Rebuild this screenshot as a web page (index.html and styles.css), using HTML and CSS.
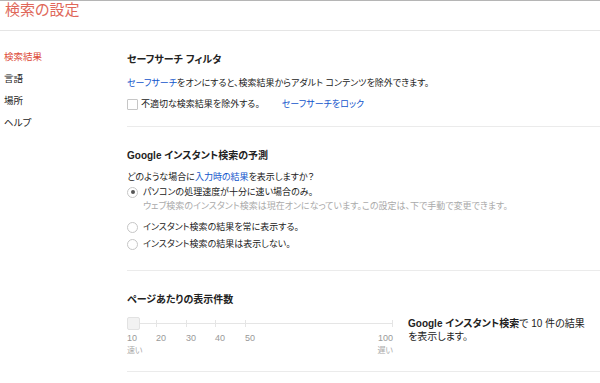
FILE: index.html
```html
<!DOCTYPE html>
<html lang="ja">
<head>
    <meta charset="utf-8">
    <title>検索の設定</title>
    <link rel="stylesheet" href="styles.css">
</head>
<body>
    <div class="top-bar">
        <h1 class="page-title">検索の設定</h1>
    </div>
    <div class="layout">
        <ul class="side-nav">
            <li class="active">検索結果</li>
            <li>言語</li>
            <li>場所</li>
            <li>ヘルプ</li>
        </ul>
        <div class="content">
            <div class="section section-safe">
                <h2>セーフサーチ フィルタ</h2>
                <p class="desc"><a href="#">セーフサーチ</a>をオンにすると、検索結果からアダルト コンテンツを除外できます。</p>
                <div class="check-row">
                    <span class="checkbox"></span>
                    <span>不適切な検索結果を除外する。</span>
                    <a href="#" class="lock-link">セーフサーチをロック</a>
                </div>
            </div>
            <div class="section section-instant">
                <h2>Google インスタント検索の予測</h2>
                <p class="question">どのような場合に<a href="#">入力時の結果</a>を表示しますか？</p>
                <div class="radio-row first">
                    <span class="radio checked"></span>
                    <span>パソコンの処理速度が十分に速い場合のみ。</span>
                </div>
                <p class="hint">ウェブ検索のインスタント検索は現在オンになっています。この設定は、下で手動で変更できます。</p>
                <div class="radio-row second">
                    <span class="radio"></span>
                    <span>インスタント検索の結果を常に表示する。</span>
                </div>
                <div class="radio-row third">
                    <span class="radio"></span>
                    <span>インスタント検索の結果は表示しない。</span>
                </div>
            </div>
            <div class="section section-count">
                <h2>ページあたりの表示件数</h2>
                <div class="count-row">
                    <div class="slider">
                        <div class="track">
                            <span class="tick"></span>
                            <span class="tick"></span>
                            <span class="tick"></span>
                            <span class="tick"></span>
                            <span class="tick"></span>
                            <span class="tick"></span>
                            <span class="thumb"></span>
                        </div>
                        <div class="labels">
                            <span>10</span>
                            <span>20</span>
                            <span>30</span>
                            <span>40</span>
                            <span>50</span>
                            <span class="end">100</span>
                        </div>
                        <div class="speed">
                            <span>速い</span>
                            <span>遅い</span>
                        </div>
                    </div>
                    <p class="count-note"><b>Google インスタント検索</b>で 10 件の結果<br>を表示します。</p>
                </div>
            </div>
        </div>
    </div>
</body>
</html>
```
FILE: styles.css
```css
body {
    margin: 0;
    font-family: "Liberation Sans", "Noto Sans CJK JP", sans-serif;
    font-size: 9px;
    color: #222;
    background: #fff;
    font-feature-settings: "palt";
}
a {
    color: #1155cc;
    text-decoration: none;
}
.top-bar {
    border-top: 1px solid #b5b5b5;
    border-bottom: 1px solid #e5e5e5;
    height: 29px;
    padding-left: 5px;
}
.page-title {
    margin: 0;
    font-size: 15px;
    font-weight: normal;
    line-height: 18px;
    color: #e0685a;
}
.layout {
    display: flex;
}
.side-nav {
    list-style: none;
    margin: 0;
    padding: 19px 0 0 4px;
    width: 123px;
    flex-shrink: 0;
    display: flex;
    flex-direction: column;
    gap: 8px;
}
.side-nav li {
    line-height: 14px;
    font-size: 9.5px;
}
.side-nav .active {
    color: #dd4b39;
}
.content {
    flex: 1;
}
.section {
    padding-top: 22px;
    border-bottom: 1px solid #ebebeb;
}
.section h2 {
    margin: 0;
    font-size: 10px;
    line-height: 14px;
    font-weight: bold;
}
.section p {
    margin: 0;
    line-height: 14px;
}
.section-safe {
    padding-bottom: 15px;
}
.desc {
    margin-top: 9px !important;
}
.check-row {
    margin-top: 7px;
    display: flex;
    align-items: center;
    line-height: 14px;
}
.checkbox {
    width: 9px;
    height: 9px;
    border: 1px solid #c6c6c6;
    border-radius: 1px;
    margin-right: 3px;
}
.lock-link {
    margin-left: 22px;
}
.section-instant {
    padding-bottom: 19px;
}
.question {
    margin-top: 7px !important;
}
.radio-row {
    display: flex;
    align-items: center;
    line-height: 14px;
    margin-top: 1px;
}
.radio-row.second {
    margin-top: 7px;
}
.radio-row.third {
    margin-top: 3px;
}
.radio {
    width: 9px;
    height: 9px;
    border: 1px solid #c6c6c6;
    border-radius: 50%;
    margin: 0 5px 0 0;
    display: flex;
    align-items: center;
    justify-content: center;
}
.radio.checked::after {
    content: "";
    width: 4px;
    height: 4px;
    border-radius: 50%;
    background: #555;
}
.hint {
    color: #aaa;
    padding-left: 16px;
}
.section-count {
    padding-bottom: 14px;
}
.count-row {
    display: flex;
    margin-top: 10px;
    gap: 15px;
}
.slider {
    width: 266px;
}
.track {
    position: relative;
    height: 13px;
    display: grid;
    grid-template-columns: 29px 30px 29px 30px 1fr 1px;
}
.track::before {
    content: "";
    position: absolute;
    left: 0;
    right: 0;
    top: 6px;
    height: 1px;
    background: #e5e5e5;
}
.tick {
    position: relative;
}
.tick::before {
    content: "";
    position: absolute;
    left: 0;
    top: 3px;
    width: 1px;
    height: 7px;
    background: #e5e5e5;
}
.tick:first-child::before {
    display: none;
}
.thumb {
    position: absolute;
    left: 0;
    top: 0;
    width: 11px;
    height: 11px;
    background: #f2f2f2;
    border: 1px solid #e2e2e2;
    border-radius: 2px;
}
.labels {
    display: grid;
    grid-template-columns: 29px 30px 29px 30px 1fr auto;
    margin-top: 2px;
    line-height: 13px;
    color: #999;
    font-size: 9px;
}
.speed {
    display: flex;
    justify-content: space-between;
    color: #aaa;
    font-size: 8px;
    line-height: 12px;
}
.count-note {
    width: 180px;
    line-height: 13px !important;
    margin-top: 0 !important;
    font-size: 10px;
}
```
